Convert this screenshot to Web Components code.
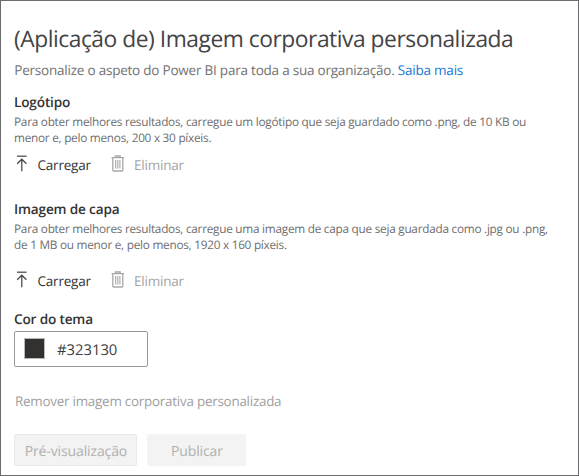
<!DOCTYPE html>
<html lang="pt"><head><meta charset="utf-8"><title>Imagem corporativa</title>
<style>
html,body{margin:0;height:100%;background:#fff}
body{font-family:"Open Sans","Noto Sans",sans-serif;text-rendering:geometricPrecision}
</style></head><body>
<branding-page></branding-page>
<script>
const define=(name,html)=>{
  const t=document.createElement('template');t.innerHTML=html;
  customElements.define(name,class extends HTMLElement{
    constructor(){super();this.attachShadow({mode:'open'}).append(t.content.cloneNode(true));}
  });
};

define('upload-icon',`<style>:host{display:block;width:12px;height:20px}svg{display:block}</style>
<svg width="12" height="20" viewBox="0 0 12 20" fill="none" stroke="#484848" stroke-width="1.25"><path d="M1 1.2h9.6"/><path d="M5.8 4.3V16.3M1.2 8.7L5.8 4.2L10.4 8.7"/></svg>`);

define('trash-icon',`<style>:host{display:block;width:14px;height:20px}svg{display:block}</style>
<svg width="14" height="20" viewBox="0 0 14 20" fill="none" stroke="#a8a8a8" stroke-width="1.3"><path d="M.5 2.7H13.1M4.4 2.7V1H9.2V2.7M1.8 2.7V15.1Q1.8 16 2.7 16H10.9Q11.8 16 11.8 15.1V2.7"/><path d="M4.7 5V13.4M6.8 5V13.4M8.9 5V13.4" stroke-width="1.1"/></svg>`);

define('asset-actions',`<style>
:host{display:flex;align-items:flex-start;height:20px;font-size:13.5px;line-height:20px;letter-spacing:-.2px;color:#333;padding-left:2px}
.up{width:73.5px;margin-left:9.5px}
.del{color:#a3a3a3;margin-left:9px}
upload-icon,trash-icon{flex:none}
</style><upload-icon></upload-icon><span class="up">Carregar</span><trash-icon></trash-icon><span class="del">Eliminar</span>`);

define('asset-section',`<style>
:host{display:block}
.head{font-size:13.6px;line-height:20px;font-weight:600;letter-spacing:-.16px;color:#333}
.text{font-size:11.8px;line-height:16px;letter-spacing:-.26px;color:#6e6e6e;margin-top:2px;white-space:nowrap}
asset-actions{margin-top:var(--gap,9px)}
</style><div class="head"><slot name="head"></slot></div><div class="text"><slot></slot></div><asset-actions></asset-actions>`);

define('color-field',`<style>
:host{display:flex;align-items:center;box-sizing:border-box;width:134px;height:36px;border:1px solid #999;border-radius:2px;padding:0 0 0 9px;font-size:14.8px;line-height:20px;color:#3c3c3c}
i{width:19px;height:19px;background:#323130;border:1px solid #b9b9b5;margin-right:12px;margin-top:-1px}
span{margin-top:2px}
</style><i></i><span><slot></slot></span>`);

define('flat-button',`<style>
:host{display:block;box-sizing:border-box;height:32px;background:#f3f3f3;border:1px solid var(--edge,#f3f3f3);border-radius:2px;padding-left:.8px;text-align:center;font-size:14px;line-height:33px;letter-spacing:-.12px;color:#b0b0b0}
</style><slot></slot>`);

define('branding-page',`<style>
:host{display:block;box-sizing:border-box;width:579px;height:476px;border:1px solid #6c6c6e;padding:22px 13px 0 13px;white-space:nowrap;background:#fff}
h1{margin:0;font-size:22.8px;line-height:32px;font-weight:400;letter-spacing:-.47px;color:#444}
.sub{margin:5px 0 0 .3px;font-size:13.5px;line-height:20px;letter-spacing:-.22px;color:#727272}
a{color:#1878d4;text-decoration:none}
.logo{margin-top:12px}
.cover{margin-top:24px;--gap:18px}
.theme{margin-top:18px;font-size:13.6px;line-height:20px;font-weight:600;letter-spacing:-.16px;color:#333}
color-field{margin-top:2px}
.remove{margin:24px 0 0 1px;font-size:13.4px;line-height:20px;letter-spacing:-.23px;color:#a0a0a0}
.buttons{display:flex;gap:10px;margin:23px 0 0}
.pre{width:123px;--edge:#e9e9e9}.pub{width:99px}
</style>
<h1>(Aplicação de) Imagem corporativa personalizada</h1>
<div class="sub">Personalize o aspeto do Power BI para toda a sua organização. <a>Saiba mais</a></div>
<asset-section class="logo"><span slot="head">Logótipo</span>Para obter melhores resultados, carregue um logótipo que seja guardado como .png, de 10 KB ou<br>menor e, pelo menos, 200 x 30 píxeis.</asset-section>
<asset-section class="cover"><span slot="head">Imagem de capa</span>Para obter melhores resultados, carregue uma imagem de capa que seja guardada como .jpg ou .png,<br>de 1 MB ou menor e, pelo menos, 1920 x 160 píxeis.</asset-section>
<div class="theme">Cor do tema</div>
<color-field>#323130</color-field>
<div class="remove">Remover imagem corporativa personalizada</div>
<div class="buttons"><flat-button class="pre">Pré-visualização</flat-button><flat-button class="pub">Publicar</flat-button></div>`);
</script></body></html>
